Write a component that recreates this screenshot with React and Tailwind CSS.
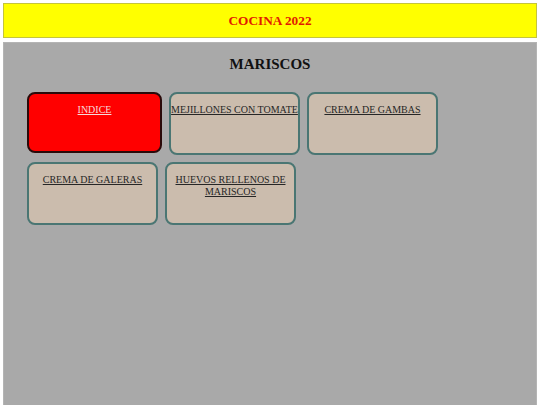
export default function App() {
  const items = [
    "MEJILLONES CON TOMATE",
    "CREMA DE GAMBAS",
    "CREMA DE GALERAS",
    "HUEVOS RELLENOS DE MARISCOS",
  ];
  return (
    <div className="w-[540px] h-[405px] overflow-hidden bg-white" style={{ fontFamily: '"Liberation Serif", "Times New Roman", serif' }}>
      <div className="mx-[3px] mt-[3px] h-[35px] border border-[#c4c43c] bg-[#ffff00] flex items-center justify-center">
        <span className="text-[13.3px] font-bold text-[#e21a00] leading-none">COCINA 2022</span>
      </div>
      <div className="mx-[3px] mt-[4px] h-[420px] border border-[#b4b4b4] bg-[#a9a9a9] pt-[13px]">
        <h2 className="text-center text-[15px] font-bold leading-[17px] text-[#111]">MARISCOS</h2>
        <div className="mt-[19px] pl-[23px] flex flex-wrap gap-[7px] w-[520px]">
          <div className="w-[135px] h-[61px] rounded-[8px] border-2 border-[#2a0a0a] bg-[#ff0000] pt-[10px] text-center">
            <div className="text-[10px] leading-[11.5px] text-[#f8dada] underline">INDICE</div>
          </div>
          {items.map((t) => (
            <div key={t} className="w-[131px] h-[63px] rounded-[8px] border-2 border-[#4a7673] bg-[#cbbcad] pt-[10px] text-center">
              <div className="text-[10px] leading-[11.5px] text-[#262626] underline whitespace-normal">{t}</div>
            </div>
          ))}
        </div>
      </div>
    </div>
  );
}
